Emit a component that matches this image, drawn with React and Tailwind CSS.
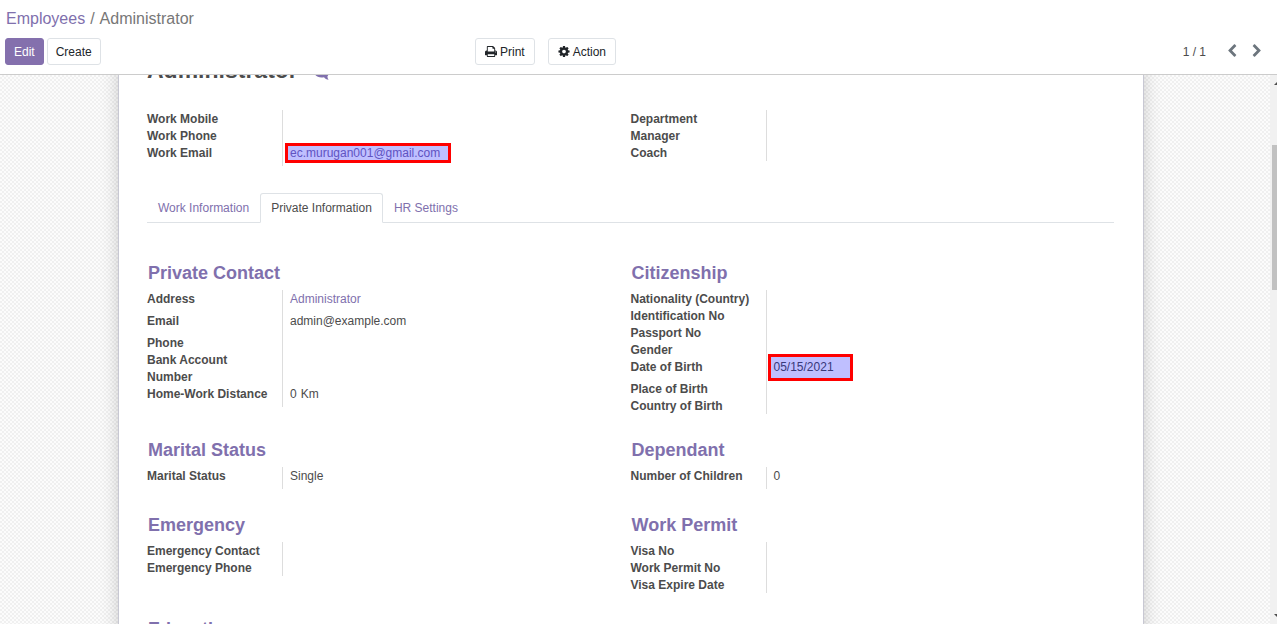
const Icon = ({ box, d, className }) => (
  <svg viewBox={box} className={className} fill="currentColor" aria-hidden="true">
    <path d={d} />
  </svg>
);

const PRINT =
  "M384 1536h896v-256H384v256zm0-640h896V512h-160q-40 0-68-28t-28-68V256H384v640zm1152 64q0-26-19-45t-45-19-45 19-19 45 19 45 45 19 45-19 19-45zm128 0v416q0 13-9.5 22.5t-22.5 9.5h-224v160q0 40-28 68t-68 28H352q-40 0-68-28t-28-68v-160H32q-13 0-22.5-9.5T0 1376V960q0-79 56.5-135.5T192 768h64V224q0-40 28-68t68-28h672q40 0 88 20t76 48l152 152q28 28 48 76t20 88v256h64q79 0 135.5 56.5T1664 960z";
const COG =
  "M1024 896q0-106-75-181t-181-75-181 75-75 181 75 181 181 75 181-75 75-181zm512-109v222q0 12-8 23t-20 13l-185 28q-19 54-39 91 35 50 107 138 10 12 10 25t-9 23q-27 37-99 108t-94 71q-12 0-26-9l-138-108q-44 23-91 38-16 136-29 186-7 28-36 28H657q-14 0-24.5-8.5T621 1642l-28-184q-49-16-90-37l-141 107q-10 9-25 9-14 0-25-11-126-114-165-168-7-10-7-23 0-12 8-23 15-21 51-66.500t54-70.500q-27-50-41-99L29 1048q-13-2-21-12.500T0 1012V790q0-12 8-23t19-13l186-28q14-46 39-92-40-57-107-138-10-12-10-24 0-10 9-23 26-36 98.500-107.500T337 270q13 0 26 10l138 107q44-23 91-38 16-136 29-186 7-28 36-28h222q14 0 24.500 8.500T915 165l28 184q49 16 90 37l142-107q9-9 24-9 13 0 25 10 129 119 165 170 7 8 7 22 0 12-8 23-15 21-51 66.500t-54 70.500q26 50 41 98l183 28q13 2 21 12.500t8 23.500z";
const LEFT =
  "M1171 301L640 832l531 531q19 19 19 45t-19 45l-166 166q-19 19-45 19t-45-19L173 877q-19-19-19-45t19-45L915 45q19-19 45-19t45 19l166 166q19 19 19 45t-19 45z";
const RIGHT =
  "M1107 877l-742 742q-19 19-45 19t-45-19l-166-166q-19-19-19-45t19-45l531-531-531-531q-19-19-19-45t19-45L275 45q19-19 45-19t45 19l742 742q19 19 19 45t-19 45z";
const COMMENT = "M7.500 0C3 0 0 2.600 0 6.200s3 6.300 7.500 6.300c.9 0 1.700-.1 2.500-.3 1.100 1.500 2.600 2.300 4.600 2.600-.8-.9-1.200-2-1.200-3.300C14.600 10 15 8 15 6.200 15 2.600 12 0 7.500 0z";

const button = "flex h-[27px] cursor-pointer items-center rounded-[3px] border";

const Fields = ({ rows }) => (
  <dl className="text-xs leading-[17px]">
    {rows.map(([label, value, marker]) => (
      <div key={label} className="grid grid-cols-[135px_1fr]">
        <dt className="-mb-px pt-px pr-2 font-bold text-[#4c4c4c]">{label}</dt>
        <dd className={`relative border-l border-[#dddddd] pl-[7px] ${value ? "pb-[5px]" : ""}`}>
          <span className="-mb-px block pt-px text-[#4c4c4c]">{value}</span>
          {marker && <span className={`pointer-events-none absolute border-3 border-[#ff0000] bg-[#0000ff]/25 ${marker}`} />}
        </dd>
      </div>
    ))}
  </dl>
);

const Section = ({ title, rows }) => (
  <section>
    <h2 className="mb-[7px] pl-px text-lg leading-5 font-bold text-[#8070ad]">{title}</h2>
    <Fields rows={rows} />
  </section>
);

const link = "text-[#8070ad]";

const SECTIONS = [
  {
    title: "Private Contact",
    rows: [
      ["Address", <a href="#address" className={link}>Administrator</a>],
      ["Email", "admin@example.com"],
      ["Phone"],
      ["Bank Account Number"],
      ["Home-Work Distance", <span className="flex gap-1"><span>0</span><span>Km</span></span>],
    ],
  },
  {
    title: "Citizenship",
    rows: [
      ["Nationality (Country)"],
      ["Identification No"],
      ["Passport No"],
      ["Gender"],
      ["Date of Birth", "05/15/2021", "left-px -top-1 h-[27px] w-[85px]"],
      ["Place of Birth"],
      ["Country of Birth"],
    ],
  },
  { title: "Marital Status", rows: [["Marital Status", "Single"]] },
  { title: "Dependant", rows: [["Number of Children", "0"]] },
  { title: "Emergency", rows: [["Emergency Contact"], ["Emergency Phone"]] },
  { title: "Work Permit", rows: [["Visa No"], ["Work Permit No"], ["Visa Expire Date"]] },
  { title: "Education", rows: [["Certificate Level"], ["Field of Study"]] },
];

export default function App() {
  return (
    <div className="flex h-screen flex-col overflow-hidden bg-white font-['Liberation_Sans',Arial,sans-serif] text-xs text-[#4c4c4c]">
      <header className="shrink-0 border-b border-[#cccccc] pt-[9px] pr-[15px] pb-[9px] pl-[5px]">
        <nav aria-label="Breadcrumb" className="flex gap-[5px] pl-px text-base leading-5 text-[#777777]">
          <a href="#employees" className={link}>Employees</a>
          <span>/</span>
          <span>Administrator</span>
        </nav>
        <div className="mt-[9px] flex items-center text-[#212529]">
          <div className="flex w-[470px] gap-[3px]">
            <button className={`${button} border-[#8470ad] bg-[#8470ad] px-2 text-white`}>Edit</button>
            <button className={`${button} border-[#dee2e6] bg-white px-2`}>Create</button>
          </div>
          <div className="flex gap-[13px]">
            <button className={`${button} gap-[3px] border-[#dee2e6] bg-white px-[9px]`}>
              <Icon box="0 0 1664 1792" d={PRINT} className="h-[13px] w-3" />
              Print
            </button>
            <button className={`${button} gap-[3px] border-[#dee2e6] bg-white px-[9px]`}>
              <Icon box="0 0 1536 1792" d={COG} className="h-[13px] w-3" />
              Action
            </button>
          </div>
          <div className="ml-auto flex items-center text-[#4c4c4c]">
            <span className="mr-[21px]">1 / 1</span>
            <button aria-label="Previous" className="mr-[15px] text-[#6c757d]">
              <Icon box="0 0 1280 1792" d={LEFT} className="-mt-px h-[14px] w-[10px]" />
            </button>
            <button aria-label="Next" className="text-[#6c757d]">
              <Icon box="0 0 1280 1792" d={RIGHT} className="-mt-px h-[14px] w-[10px]" />
            </button>
          </div>
        </div>
      </header>

      <div className="flex min-h-0 flex-1 overflow-hidden">
        <main className="flex-1 overflow-hidden bg-[#fcfcfc] bg-[conic-gradient(#f0f0f0_25%,#fcfcfc_0_50%,#f0f0f0_0_75%,#fcfcfc_0)] bg-size-[4px_4px] pr-[126px] pl-[118px]">
          <div className="-mt-5 min-h-[800px] border border-[#c8c8d3] bg-white pr-[29px] pl-7 shadow-[0_5px_20px_-5px_rgba(0,0,0,0.3)]">
            <div className="flex items-start gap-4">
              <h1 className="text-[23px] leading-7 font-bold">Administrator</h1>
              <button aria-label="Chat" className={link}>
                <Icon box="0 0 16 16" d={COMMENT} className="mt-[9px] size-4" />
              </button>
            </div>
            <div className="mt-[26px] grid grid-cols-2 items-start">
              <Fields
                rows={[
                  ["Work Mobile"],
                  ["Work Phone"],
                  ["Work Email", <a href="mailto:ec.murugan001@gmail.com" className={link}>ec.murugan001@gmail.com</a>, "left-[2px] -top-px h-5 w-[166px]"],
                ]}
              />
              <Fields rows={[["Department"], ["Manager"], ["Coach"]]} />
            </div>
            <div role="tablist" className="mt-[27px] flex border-b border-[#dee2e6]">
              <button role="tab" className={`h-[29px] border border-transparent px-[10px] ${link}`}>Work Information</button>
              <button role="tab" aria-selected="true" className="-mb-px h-[30px] rounded-t-[3px] border border-[#dee2e6] border-b-white bg-white px-[10px]">
                Private Information
              </button>
              <button role="tab" className={`h-[29px] border border-transparent px-[10px] ${link}`}>HR Settings</button>
            </div>
            <div className="mt-10 grid grid-cols-2 items-start gap-y-[26px]">
              {SECTIONS.map((s) => (
                <Section key={s.title} {...s} />
              ))}
            </div>
          </div>
        </main>
        <div className="flex w-[7px] shrink-0 flex-col items-end bg-[#f1f1f1] text-[#4c4c4c]" aria-hidden="true">
          <svg viewBox="0 0 3 4" className="mt-[6px] h-1 w-[3px]" fill="currentColor"><path d="M0 4L3 1V4Z" /></svg>
          <div className="mt-[60px] h-[145px] w-[5px] bg-[#c1c1c1]" />
          <svg viewBox="0 0 3 4" className="mt-auto mb-[6px] h-1 w-[3px]" fill="currentColor"><path d="M0 0H3V3Z" /></svg>
        </div>
      </div>
    </div>
  );
}
